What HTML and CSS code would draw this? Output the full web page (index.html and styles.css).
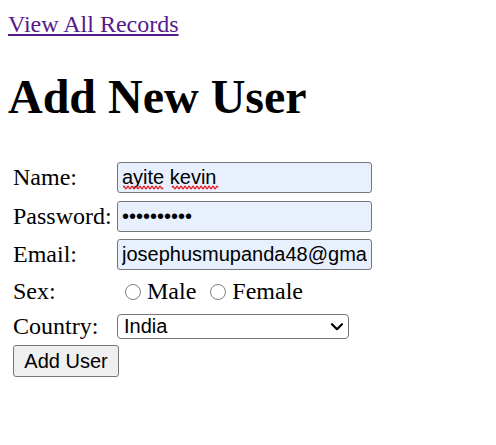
FILE: index.html
```html
<!DOCTYPE html>
<html>
<head>
<meta charset="utf-8">
<title>Add New User</title>
<link rel="stylesheet" href="styles.css">
</head>
<body>
<div class="nav"><a class="nav-link" href="#">View All Records</a></div>
<h1 class="title">Add New User</h1>
<form class="form">
  <label class="label" for="name">Name:</label>
  <span class="field">
    <input class="text-input" id="name" type="text" value="ayite kevin" spellcheck="false">
    <svg class="squiggle" width="100" height="5" viewBox="0 0 100 5" aria-hidden="true">
      <path d="M0 2.5 Q1 0 2 2.5 T4 2.5 T6 2.5 T8 2.5 T10 2.5 T12 2.5 T14 2.5 T16 2.5 T18 2.5 T20 2.5 T22 2.5 T24 2.5 T26 2.5 T28 2.5 T30 2.5 T32 2.5 T34 2.5 T36 2.5 T38 2.5 T40 2.5" />
      <path d="M49 2.5 Q50 0 51 2.5 T53 2.5 T55 2.5 T57 2.5 T59 2.5 T61 2.5 T63 2.5 T65 2.5 T67 2.5 T69 2.5 T71 2.5 T73 2.5 T75 2.5 T77 2.5 T79 2.5 T81 2.5 T83 2.5 T85 2.5 T87 2.5 T89 2.5 T91 2.5 T93 2.5 T95 2.5" />
    </svg>
  </span>

  <label class="label" for="password">Password:</label>
  <input class="text-input" id="password" type="password" value="abcdefghij">

  <label class="label" for="email">Email:</label>
  <input class="text-input" id="email" type="text" value="josephusmupanda48@gmail.com">

  <span class="label">Sex:</span>
  <span class="choices">
    <label class="choice"><input class="radio" type="radio" name="sex" value="male">Male</label>
    <label class="choice"><input class="radio" type="radio" name="sex" value="female">Female</label>
  </span>

  <label class="label" for="country">Country:</label>
  <span class="select-wrap">
    <select class="select" id="country">
      <option>India</option>
      <option>Pakistan</option>
      <option>Afghanistan</option>
      <option>Berma</option>
      <option>Other</option>
    </select>
    <svg class="chevron" width="12" height="8" viewBox="0 0 12 8" aria-hidden="true">
      <polyline points="1,1.2 6,6.2 11,1.2" />
    </svg>
  </span>

  <button class="submit" type="button">Add User</button>
</form>
</body>
</html>
```

FILE: styles.css
```css
html {
  background: #ffffff;
}

body {
  margin: 11px 8px 8px;
  font-family: "Liberation Serif", "Times New Roman", serif;
  color: #000000;
}

.nav {
  font-size: 24px;
  line-height: 27px;
}

.nav-link {
  color: #551a8b;
  text-decoration: underline;
}

.title {
  font-size: 48px;
  line-height: 53px;
  font-weight: bold;
  margin: 32px 0 35px;
}

.form {
  display: grid;
  grid-template-columns: 104px auto;
  grid-template-rows: 39px 38px 38px 36px 34px 36px;
  align-items: center;
  justify-items: start;
  margin: 0 0 0 5px;
}

.label {
  font-size: 24px;
  line-height: 27px;
}

.field {
  position: relative;
  display: block;
  line-height: 0;
}

.text-input {
  box-sizing: border-box;
  width: 255px;
  height: 31px;
  margin: 0;
  padding: 0 4px;
  border: 1px solid #767676;
  border-radius: 3px;
  background: #e8f0fe;
  color: #000000;
  font-family: "Liberation Sans", Arial, sans-serif;
  font-size: 20px;
  outline: none;
}

.squiggle {
  position: absolute;
  left: 6px;
  top: 23px;
  fill: none;
  stroke: #e01e1e;
  stroke-width: 1.3;
}

.choices {
  display: flex;
  align-items: center;
  gap: 14px;
  padding-left: 8px;
  font-size: 24px;
  line-height: 27px;
}

.choice {
  display: flex;
  align-items: center;
}

.radio {
  appearance: none;
  -webkit-appearance: none;
  flex: none;
  box-sizing: border-box;
  width: 16px;
  height: 16px;
  margin: 1px 6px 0 0;
  border: 1.3px solid #808080;
  border-radius: 50%;
  background: #ffffff;
}

.select-wrap {
  position: relative;
  display: block;
  line-height: 0;
}

.select {
  appearance: none;
  -webkit-appearance: none;
  box-sizing: border-box;
  width: 232px;
  height: 25px;
  margin: 0;
  padding: 0 24px 0 6px;
  border: 1px solid #767676;
  border-radius: 4px;
  background: #ffffff;
  color: #000000;
  font-family: "Liberation Sans", Arial, sans-serif;
  font-size: 20px;
  line-height: 23px;
}

.chevron {
  position: absolute;
  right: 6px;
  top: 9px;
  fill: none;
  stroke: #000000;
  stroke-width: 2.2;
  stroke-linecap: round;
  stroke-linejoin: round;
  pointer-events: none;
}

.submit {
  grid-column: 1 / -1;
  box-sizing: border-box;
  width: 106px;
  height: 32px;
  margin: 0;
  padding: 0;
  border: 1px solid #767676;
  border-radius: 3px;
  background: #efefef;
  color: #000000;
  font-family: "Liberation Sans", Arial, sans-serif;
  font-size: 20px;
}
```
